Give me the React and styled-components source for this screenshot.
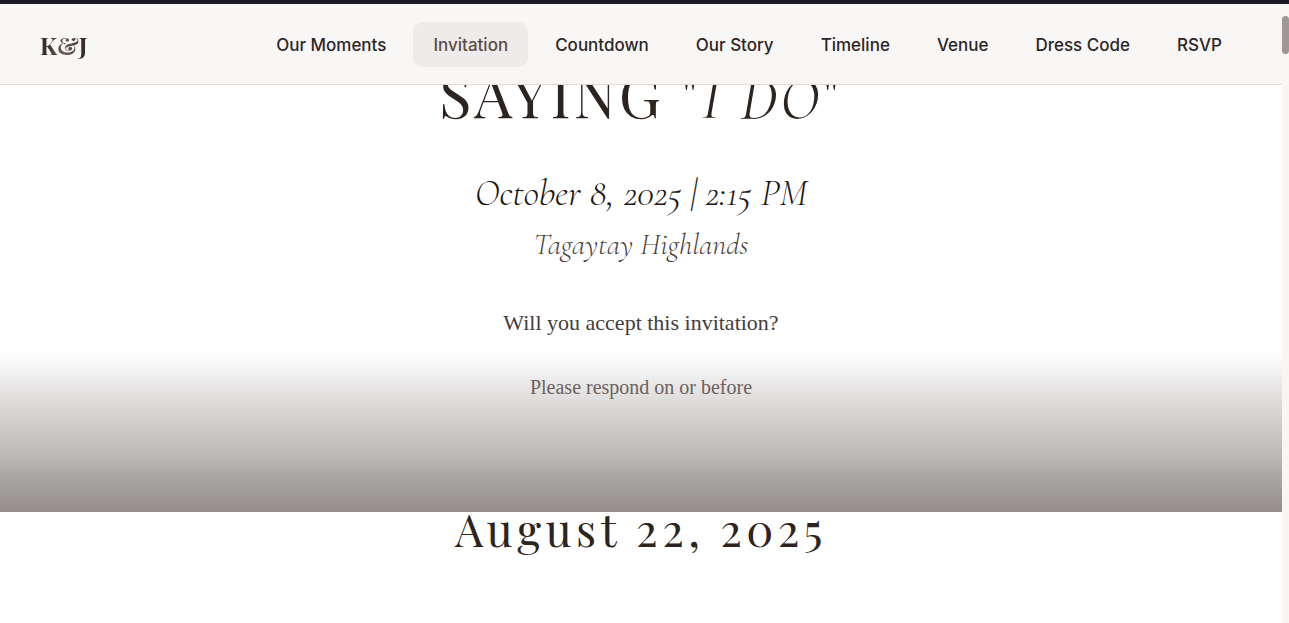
import React from "react";
import styled, { createGlobalStyle } from "styled-components";

const GlobalStyle = createGlobalStyle`
  *, *::before, *::after { box-sizing: border-box; }
  body { margin: 0; background: #ffffff; color: #2d2420; }
`;

const serif = `"Playfair Display", "Liberation Serif", serif`;
const script = `"Cormorant Garamond", "Liberation Serif", serif`;
const sans = `Inter, "Liberation Sans", sans-serif`;

const Frame = styled.div`
  display: grid;
  grid-template-columns: minmax(0, 1fr) 7px;
  min-height: 100vh;
  border-top: 4px solid #1a1a27;
  overflow: hidden;
`;

const Page = styled.div`
  min-width: 0;
`;

const Header = styled.header`
  position: sticky;
  top: 0;
  z-index: 2;
  display: flex;
  align-items: center;
  justify-content: space-between;
  padding: 18px 40px 17px;
  background: #f9f7f6;
  border-bottom: 1px solid #e3d8d1;
`;

const Logo = styled.a`
  font: 700 24px/32px ${serif};
  text-decoration: none;
  color: transparent;
  background: linear-gradient(90deg, #2d2420, #6b5a54 50%, #2d2420);
  background-clip: text;
`;

const Nav = styled.nav`
  display: flex;
  gap: 7px;
`;

const NavLink = styled.a`
  padding: 11px 20px 10px;
  border-radius: 10px;
  font: 500 17px/24px ${sans};
  white-space: nowrap;
  text-decoration: none;
  color: ${(p) => (p.$active ? "#5e4b45" : "#2d2626")};
  background: ${(p) => (p.$active ? "#eeebea" : "transparent")};
`;

const Hero = styled.section`
  display: flex;
  flex-direction: column;
  align-items: center;
  margin-top: -32px;
  padding-bottom: 113px;
  text-align: center;
  background: linear-gradient(
      to bottom,
      #ffffff,
      #dddbda 32%,
      #b9b8b6 66%,
      #aca8a7 76%,
      #938e8b
    )
    bottom / 100% 160px no-repeat;
`;

const Title = styled.h1`
  margin: 0;
  font: 400 60px/80px ${serif};
  letter-spacing: 0.05em;
`;

const Vow = styled.em`
  font-family: ${script};
`;

const When = styled.p`
  margin: 30px 0 0;
  font: italic 300 38px/48px ${script};
  color: #1c1512;
`;

const Where = styled.p`
  margin: 4px 0 0;
  font: italic 300 30px/48px ${script};
  color: #4b413e;
`;

const Question = styled.p`
  margin: 40px 0 0;
  font: 400 22px/28px "Liberation Serif", serif;
  color: #443d3a;
`;

const Note = styled.p`
  margin: 38px 0 0;
  font: 400 20px/24px "Liberation Serif", serif;
  color: #6b615e;
`;

const Reply = styled.section`
  text-align: center;
`;

const Deadline = styled.h2`
  margin: 0;
  font: 400 45px/32px ${serif};
  letter-spacing: 0.1em;
`;

const ScrollTrack = styled.div`
  padding-top: 12px;
  background: #f8f6f5;
`;

const ScrollThumb = styled.div`
  height: 38px;
  border-radius: 4px;
  background: #a09796;
`;

const links = [
  ["Our Moments", "#moments"],
  ["Invitation", "#invitation"],
  ["Countdown", "#countdown"],
  ["Our Story", "#story"],
  ["Timeline", "#timeline"],
  ["Venue", "#venue"],
  ["Dress Code", "#dress-code"],
  ["RSVP", "#rsvp"],
];

export default function App() {
  return (
    <>
      <GlobalStyle />
      <Frame>
        <Page>
          <Header>
            <Logo href="#home">K&amp;J</Logo>
            <Nav>
              {links.map(([label, href]) => (
                <NavLink key={href} href={href} $active={label === "Invitation"}>
                  {label}
                </NavLink>
              ))}
            </Nav>
          </Header>
          <main>
            <Hero id="invitation">
              <Title>
                SAYING "<Vow>I DO</Vow>"
              </Title>
              <When>October 8, 2025 | 2:15 PM</When>
              <Where>Tagaytay Highlands</Where>
              <Question>Will you accept this invitation?</Question>
              <Note>Please respond on or before</Note>
            </Hero>
            <Reply>
              <Deadline>August 22, 2025</Deadline>
            </Reply>
          </main>
        </Page>
        <ScrollTrack aria-hidden="true">
          <ScrollThumb />
        </ScrollTrack>
      </Frame>
    </>
  );
}
